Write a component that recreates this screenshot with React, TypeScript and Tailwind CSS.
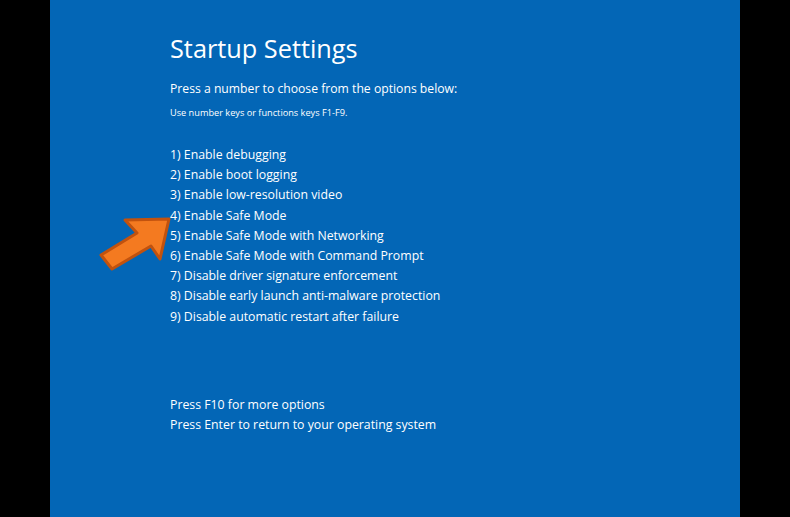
export default function App() {
  const options = [
    "1) Enable debugging",
    "2) Enable boot logging",
    "3) Enable low-resolution video",
    "4) Enable Safe Mode",
    "5) Enable Safe Mode with Networking",
    "6) Enable Safe Mode with Command Prompt",
    "7) Disable driver signature enforcement",
    "8) Disable early launch anti-malware protection",
    "9) Disable automatic restart after failure",
  ];

  return (
    <div className="flex h-[517px] w-[790px] bg-black" style={{ fontFamily: '"Open Sans", "Noto Sans", sans-serif' }}>
      <div className="w-[50px]" />
      <div className="relative w-[690px] bg-[#0366b6] pl-[120px] pt-[30px] text-white">
        <h1 className="text-[25.3px] leading-[36px]">Startup Settings</h1>
        <p className="mt-[13px] text-[12.2px] leading-[20px]">Press a number to choose from the options below:</p>
        <p className="mt-[7px] text-[9.2px] leading-[14px]">Use number keys or functions keys F1-F9.</p>
        <ul className="mt-[25px] text-[12.3px] leading-[20.2px]">
          {options.map((o) => (
            <li key={o}>{o}</li>
          ))}
        </ul>
        <div className="mt-[68px] text-[12.3px] leading-[20px]">
          <p>Press F10 for more options</p>
          <p>Press Enter to return to your operating system</p>
        </div>

        {/* orange pointer arrow */}
        <svg className="absolute left-[40px] top-[205px]" width="140" height="80" viewBox="90 205 140 80">
          <polygon
            points="169,219 125,220 137,233 101,255 112,269 151,246 160,259"
            fill="#f47a20"
            stroke="#c2520e"
            strokeWidth="3"
            strokeLinejoin="round"
          />
        </svg>
      </div>
      <div className="w-[50px]" />
    </div>
  );
}
